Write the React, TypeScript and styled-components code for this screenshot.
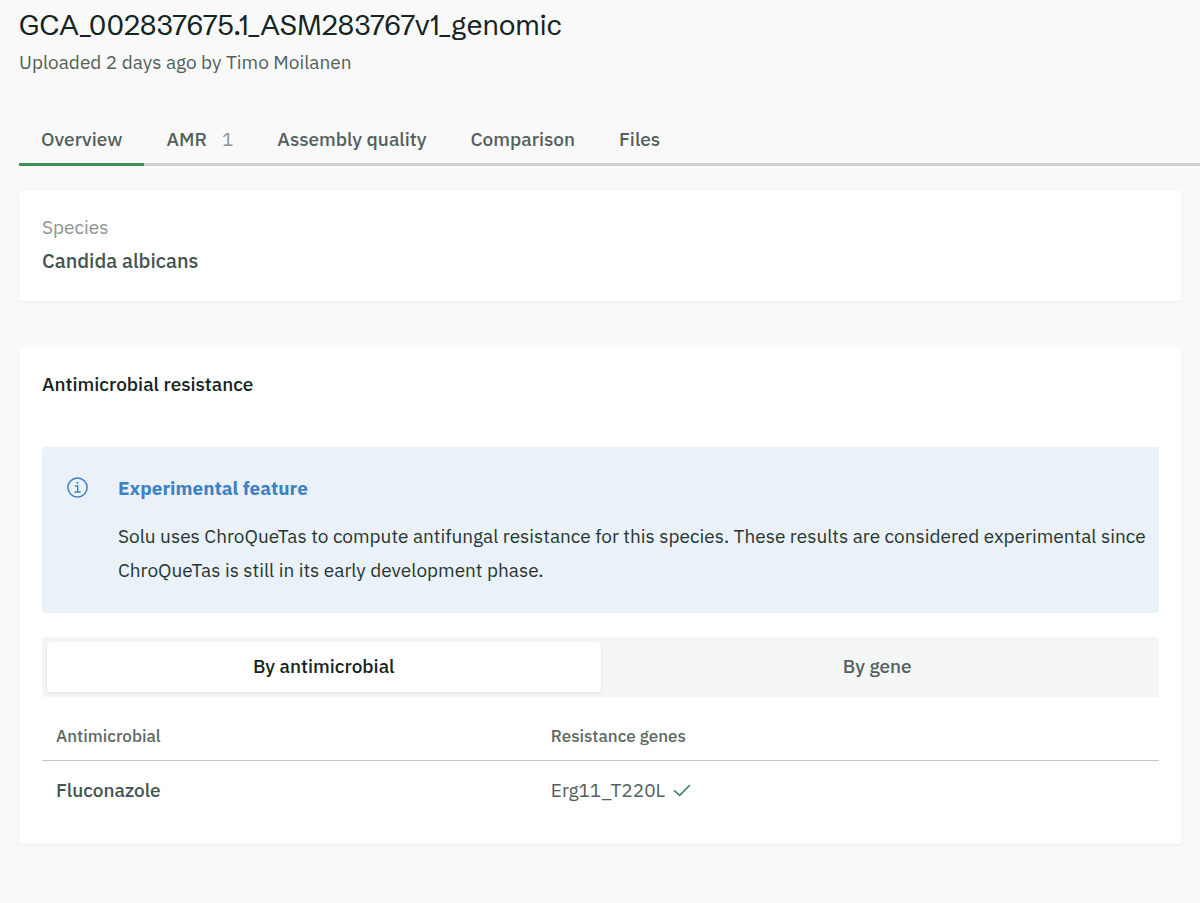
import React, { useState } from "react";
import styled, { createGlobalStyle } from "styled-components";

const GlobalStyle = createGlobalStyle`
  *, *::before, *::after { box-sizing: border-box; }
  body {
    margin: 0;
    background: #f9f9f9;
    color: #1a2b26;
    font-family: "IBM Plex Sans", Roboto, "Liberation Sans", sans-serif;
    font-size: 19px;
    line-height: 24px;
  }
  button { font: inherit; color: inherit; border: 0; background: none; cursor: pointer; }
`;

const Page = styled.main`
  padding: 5px 0 59px 19px;
`;

const Title = styled.h1`
  margin: 0;
  font-family: "Schibsted Grotesk", Inter, sans-serif;
  font-size: 28px;
  font-weight: 400;
  line-height: 40px;
  color: #14241f;
`;

const Subtitle = styled.p`
  margin: 5px 0 0;
  color: #52605b;
`;

const TabBar = styled.nav`
  display: flex;
  margin-top: 39px;
  border-bottom: 3px solid #cdd1cf;
`;

const Tab = styled.button<{ $active: boolean }>`
  display: flex;
  gap: 15px;
  margin-bottom: -3px;
  padding: 14px 22px 12px;
  font-weight: 500;
  color: #52605b;
  border-bottom: 3px solid ${(p) => (p.$active ? "#3f8f58" : "transparent")};
`;

const TabCount = styled.span`
  font-weight: 400;
  color: #8c9592;
`;

const Card = styled.section`
  margin: 0 18px 46px 0;
  padding: 25px 23px 27px;
  background: #fff;
  border-radius: 4px;
  box-shadow: 0 1px 3px rgba(20, 36, 31, 0.06);

  &:last-child { margin-bottom: 0; }
`;

const Content = styled.div`
  margin-top: 24px;
`;

const Facts = styled.dl`
  margin: 0;
`;

const FactLabel = styled.dt`
  color: #8c9592;
`;

const FactValue = styled.dd`
  margin: 9px 0 0;
  font-size: 20px;
  line-height: 26px;
  font-weight: 500;
  color: #45534e;
`;

const CardTitle = styled.h2`
  margin: 0 0 51px;
  font-size: 19px;
  font-weight: 500;
  color: #14241f;
`;

const Notice = styled.aside`
  display: flex;
  gap: 30px;
  padding: 25px 8px 26px 25px;
  background: #eaf1f9;
  border-radius: 3px;

  svg { flex: none; margin-top: 5px; }
`;

const NoticeTitle = styled.h3`
  margin: 4px 0 19px;
  font-size: 19px;
  font-weight: 700;
  color: #3f82c4;
`;

const NoticeText = styled.p`
  margin: 0;
  line-height: 34px;
  color: #26362f;
`;

const Segments = styled.div`
  display: flex;
  margin-top: 24px;
  padding: 5px;
  background: #f4f6f5;
  border-radius: 3px;
`;

const Segment = styled.button<{ $active: boolean }>`
  flex: 1;
  padding: 12px 12px 14px;
  font-weight: 500;
  color: ${(p) => (p.$active ? "#14241f" : "#52605b")};
  background: ${(p) => (p.$active ? "#fff" : "transparent")};
  border-radius: 4px;
  box-shadow: ${(p) => (p.$active ? "0 1px 3px rgba(20, 36, 31, 0.1)" : "none")};
`;

const Table = styled.table`
  width: 100%;
  margin-top: 15px;
  border-collapse: collapse;
  table-layout: fixed;
  text-align: left;

  th, td { padding: 17px 14px 15px; }
  thead th {
    padding: 12px 14px;
    font-size: 17px;
    font-weight: 500;
    color: #5b6864;
    border-bottom: 1px solid #c4c9c7;
  }
  thead th:first-child { width: 44.3%; }
  tbody th { font-weight: 500; color: #45534e; }
  td { color: #52605b; }
`;

const Gene = styled.span`
  display: flex;
  align-items: center;
  gap: 8px;
`;

const InfoIcon = () => (
  <svg width="21" height="21" viewBox="0 0 21 21" fill="none" stroke="#3f82c4" aria-hidden="true">
    <circle cx="10.5" cy="10.5" r="9.6" strokeWidth="1.5" />
    <path d="M8 9h2.7v6M7.4 15h6.2" strokeWidth="1.4" />
    <circle cx="10.4" cy="5.7" r="1" fill="#3f82c4" stroke="none" />
  </svg>
);

const CheckIcon = () => (
  <svg width="18" height="14" viewBox="0 0 18 14" fill="none" stroke="#3c8256" strokeWidth="1.5" role="img" aria-label="Confirmed">
    <path d="M1 7.2l5.7 5.2L17 2" />
  </svg>
);

const tabs = [
  { label: "Overview" },
  { label: "AMR", count: 1 },
  { label: "Assembly quality" },
  { label: "Comparison" },
  { label: "Files" },
];
const views = ["By antimicrobial", "By gene"];
const rows = [{ antimicrobial: "Fluconazole", gene: "Erg11_T220L" }];

export default function App() {
  const [tab, setTab] = useState("Overview");
  const [view, setView] = useState(views[0]);

  return (
    <Page>
      <GlobalStyle />
      <header>
        <Title>GCA_002837675.1_ASM283767v1_genomic</Title>
        <Subtitle>Uploaded 2 days ago by Timo Moilanen</Subtitle>
      </header>
      <TabBar>
        {tabs.map(({ label, count }) => (
          <Tab key={label} $active={label === tab} onClick={() => setTab(label)}>
            {label}
            {count !== undefined && <TabCount>{count}</TabCount>}
          </Tab>
        ))}
      </TabBar>
      <Content>
        <Card>
          <Facts>
            <FactLabel>Species</FactLabel>
            <FactValue>Candida albicans</FactValue>
          </Facts>
        </Card>
        <Card>
          <CardTitle>Antimicrobial resistance</CardTitle>
          <Notice>
            <InfoIcon />
            <div>
              <NoticeTitle>Experimental feature</NoticeTitle>
              <NoticeText>
                Solu uses ChroQueTas to compute antifungal resistance for this species. These results are
                considered experimental since ChroQueTas is still in its early development phase.
              </NoticeText>
            </div>
          </Notice>
          <Segments>
            {views.map((v) => (
              <Segment key={v} $active={v === view} aria-pressed={v === view} onClick={() => setView(v)}>
                {v}
              </Segment>
            ))}
          </Segments>
          <Table>
            <thead>
              <tr>
                <th scope="col">Antimicrobial</th>
                <th scope="col">Resistance genes</th>
              </tr>
            </thead>
            <tbody>
              {rows.map((r) => (
                <tr key={r.antimicrobial}>
                  <th scope="row">{r.antimicrobial}</th>
                  <td>
                    <Gene>
                      {r.gene}
                      <CheckIcon />
                    </Gene>
                  </td>
                </tr>
              ))}
            </tbody>
          </Table>
        </Card>
      </Content>
    </Page>
  );
}
